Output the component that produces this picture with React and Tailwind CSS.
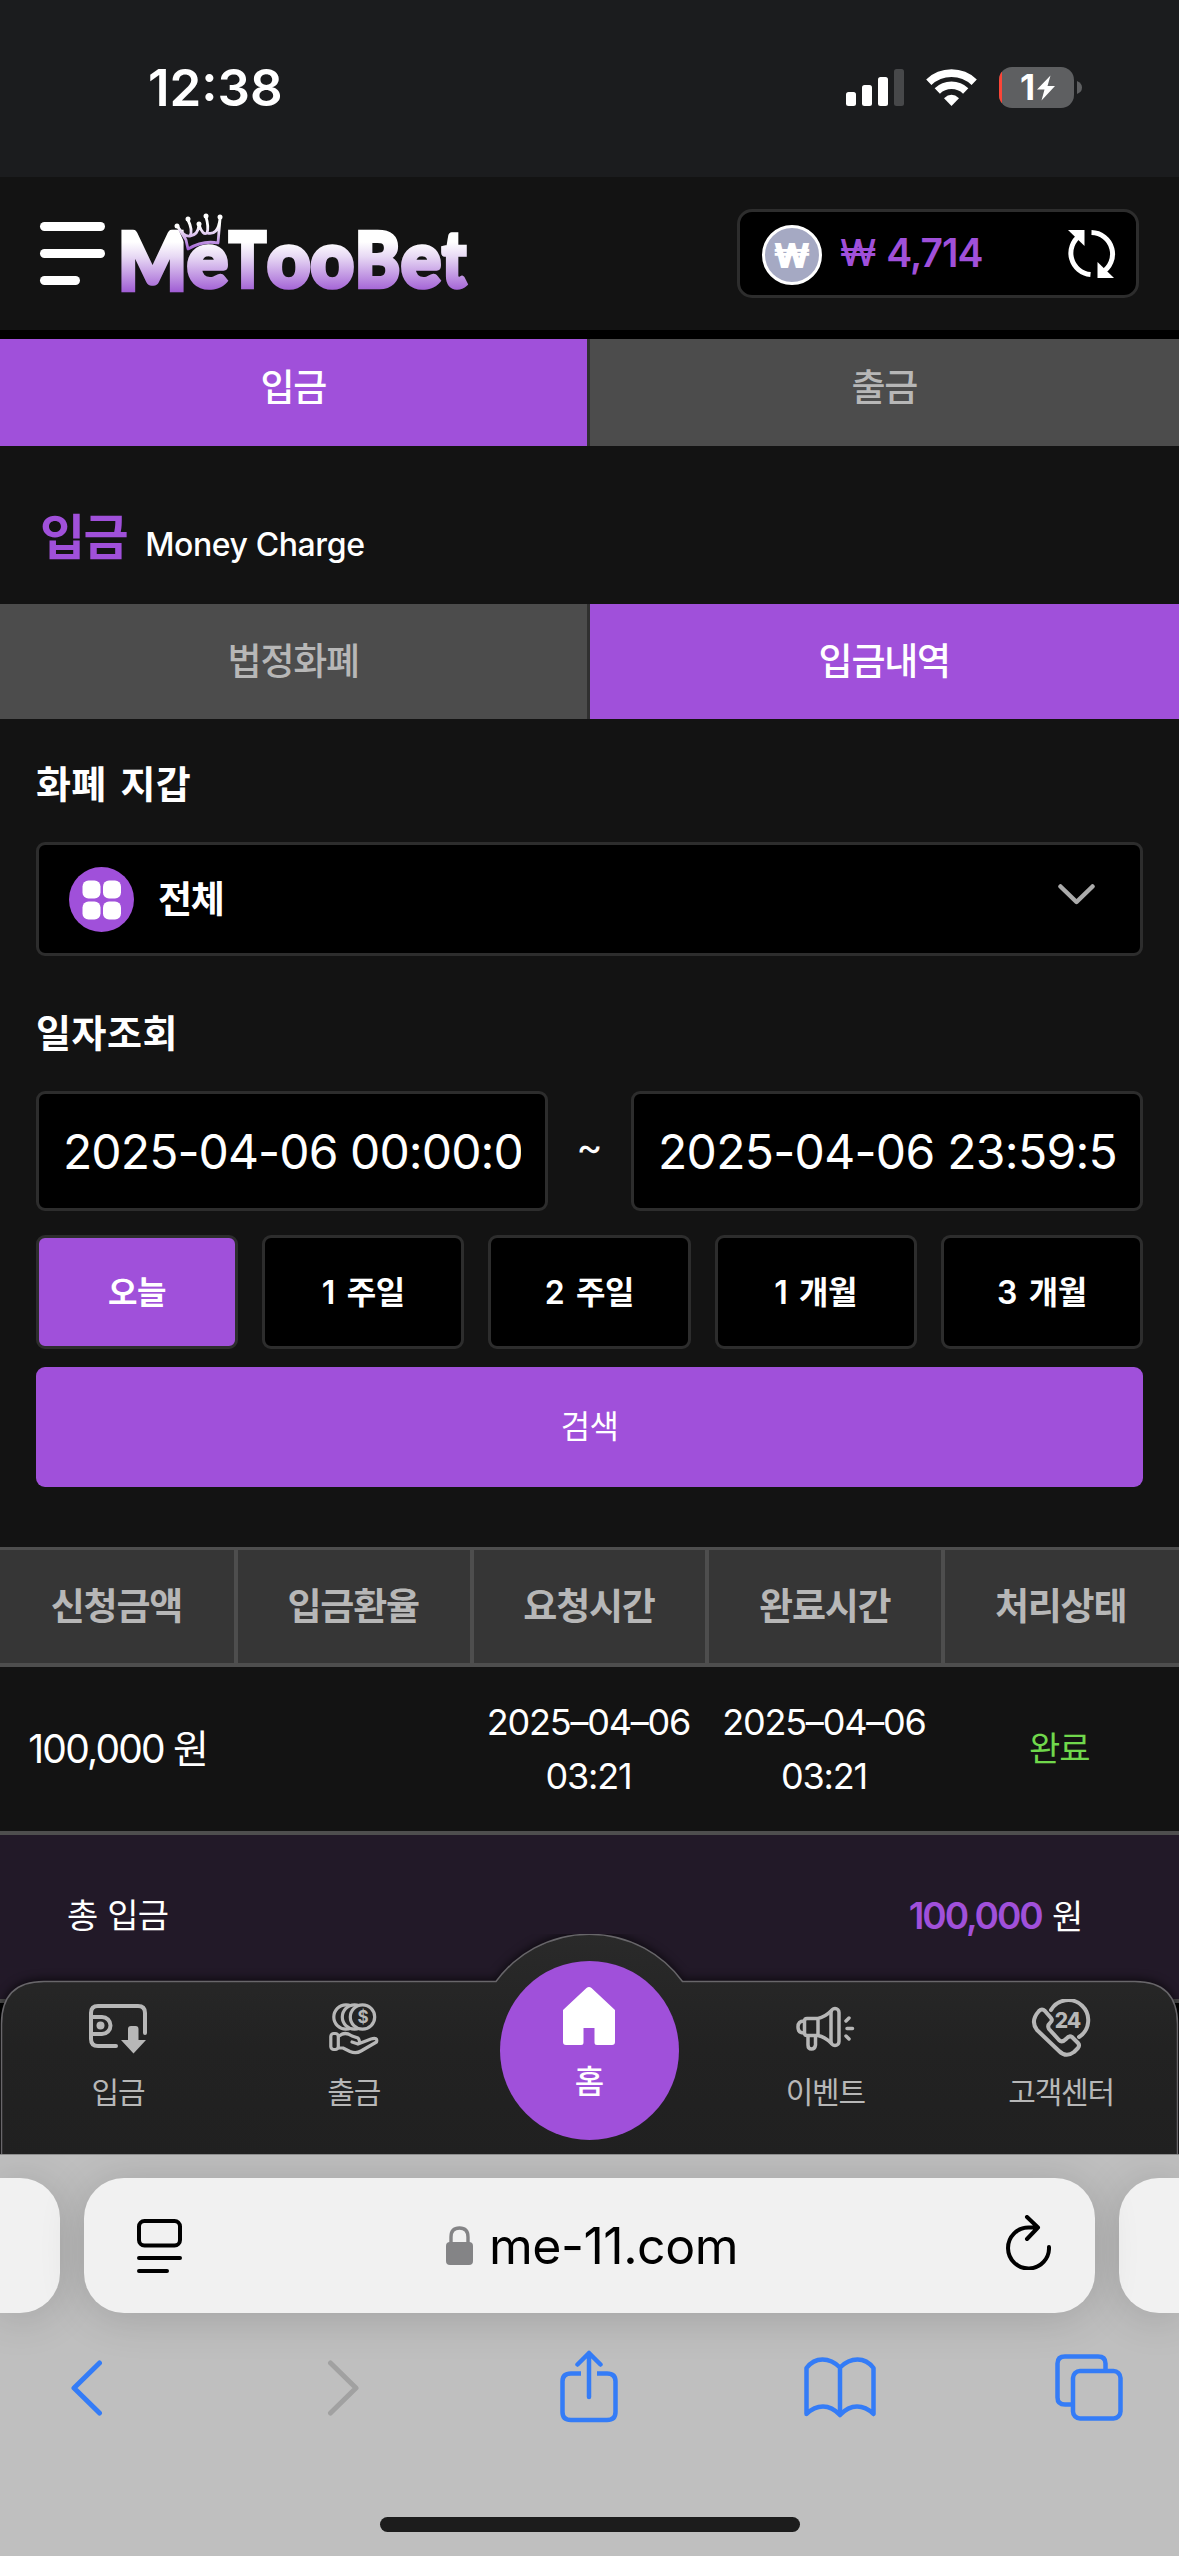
import clsx from 'clsx';

const periods = ['오늘', '1 주일', '2 주일', '1 개월', '3 개월'];
const columns = ['신청금액', '입금환율', '요청시간', '완료시간', '처리상태'];

function StatusBar() {
  return (
    <div className="flex h-[177px] shrink-0 items-start justify-between bg-[#1b1c1e] pr-[97px] pl-[148px] text-white">
      <span className="pt-[57px] text-[51px] leading-[62px] font-semibold">12:38</span>
      <div className="flex items-start pt-[67px]">
        <svg className="mt-[2px] h-[37px] w-[58px]" viewBox="0 0 58 37" fill="white">
          <rect x="0" y="23" width="10" height="14" rx="2.5" />
          <rect x="16" y="16" width="10" height="21" rx="2.5" />
          <rect x="32" y="8" width="10" height="29" rx="2.5" />
          <rect x="48" y="0" width="10" height="37" rx="2.5" fill="#47484a" />
        </svg>
        <svg className="mt-[2px] ml-[22px] h-[37px] w-[51px]" viewBox="0 0 51 37">
          <g fill="none" stroke="white" strokeWidth="7.6">
            <path d="M2.8 13.2A33 33 0 0 1 48.2 13.2" />
            <path d="M11.3 22A20.5 20.5 0 0 1 39.7 22" />
          </g>
          <path d="M25.5 37L18 29.2Q25.5 22.4 33 29.2Z" fill="white" />
        </svg>
        <div className="relative ml-[22px] h-[41px] w-[75px] overflow-hidden rounded-[13px] bg-[#5e5f61]">
          <div className="absolute inset-y-0 left-0 w-[3px] bg-[#fb4537]" />
          <div className="flex h-full items-center justify-center gap-[2px] pl-[2px]">
            <span className="text-[35px] leading-[41px] font-bold">1</span>
            <svg className="h-[26px] w-[18px]" viewBox="0 0 18 25" fill="white">
              <path d="M13.5 0L0 14H7.5L4.5 25L18 10.5H10.5Z" />
            </svg>
          </div>
        </div>
        <svg className="mt-[14px] ml-[3px] h-[13px] w-[5px]" viewBox="0 0 5 13">
          <path d="M0 0Q5 2 5 6.5T0 13Z" fill="#5e5f61" />
        </svg>
      </div>
    </div>
  );
}

function Logo() {
  return (
    <svg className="ml-[13px] h-[84px] w-[352px] overflow-visible" viewBox="118 212 352 84">
      <defs>
        <linearGradient id="logo" gradientUnits="userSpaceOnUse" x1="0" y1="242" x2="0" y2="292">
          <stop offset="0" stopColor="#ffffff" />
          <stop offset="0.3" stopColor="#e7d8f4" />
          <stop offset="1" stopColor="#a05dd4" />
        </linearGradient>
        <linearGradient id="crown" gradientUnits="userSpaceOnUse" x1="0" y1="226" x2="0" y2="250">
          <stop offset="0" stopColor="#ffffff" />
          <stop offset="1" stopColor="#a05dd4" />
        </linearGradient>
      </defs>
      <g
        fill="url(#logo)"
        stroke="url(#logo)"
        strokeWidth="4.5"
        fontFamily="Lato, Inter, sans-serif"
        fontWeight="900"
      >
        <text x="118" y="290" fontSize="80" textLength="69" lengthAdjust="spacingAndGlyphs">M</text>
        <text x="187" y="287" fontSize="79" textLength="41" lengthAdjust="spacingAndGlyphs">e</text>
        <text x="229" y="287" fontSize="76" textLength="37" lengthAdjust="spacingAndGlyphs">T</text>
        <text x="267" y="287" fontSize="79" textLength="87" lengthAdjust="spacingAndGlyphs">oo</text>
        <text x="355" y="287" fontSize="76" textLength="45" lengthAdjust="spacingAndGlyphs">B</text>
        <text x="401" y="287" fontSize="79" textLength="40" lengthAdjust="spacingAndGlyphs">e</text>
        <text x="442" y="287" fontSize="79" textLength="24" lengthAdjust="spacingAndGlyphs">t</text>
      </g>
      <path d="M177 226L187 249Q203 241 219 243L220 217L210 233L206 217L200 233L198 225L191 236L188 219L186 236Z" fill="#131313" />
      <path
        d="M178 227L186 240L188 249Q203 240 218 243L220 219M178 227Q184 237 190 236Q193 230 188 220M190 236Q198 235 199 225Q203 236 207 233Q209 227 206 217M207 233Q218 236 220 219"
        fill="none"
        stroke="url(#crown)"
        strokeWidth="2.8"
        strokeLinejoin="round"
      />
      <g fill="white">
        <circle cx="177" cy="226" r="2.5" />
        <circle cx="188" cy="219" r="2.5" />
        <circle cx="199" cy="224" r="2.5" />
        <circle cx="206" cy="216" r="2.5" />
        <circle cx="220" cy="217" r="2.5" />
      </g>
    </svg>
  );
}

function Header() {
  return (
    <header className="flex h-[162px] shrink-0 items-start border-b-[9px] border-black bg-[#131313] pl-[40px]">
      <div className="mt-[45px] flex w-[65px] flex-col gap-[18px]">
        <div className="h-[9px] rounded-full bg-white" />
        <div className="h-[9px] rounded-full bg-white" />
        <div className="h-[9px] w-[40px] rounded-full bg-white" />
      </div>
      <div className="mt-[35px]">
        <Logo />
      </div>
      <div className="mt-[32px] mr-[40px] ml-auto flex h-[89px] w-[402px] items-center rounded-[15px] border-[3px] border-[#2d2d2d] bg-black pr-[20px] pl-[22px]">
        <div className="mt-[3px] flex size-[60px] items-center justify-center rounded-full border-[3px] border-white bg-[#a5a9c3] text-[34px] font-black text-white">
          ₩
        </div>
        <span className="mb-[3px] ml-[18px] text-[37px] leading-none font-medium text-[#a050da]">₩</span>
        <span className="mb-[3px] ml-[10px] text-[39px] leading-none font-semibold tracking-[-1px] text-[#a050da]">4,714</span>
        <svg className="ml-auto h-[48px] w-[50px]" viewBox="0 0 50 48">
          <g fill="none" stroke="white" strokeWidth="5">
            <path d="M25.5 2.5A21.5 21.5 0 0 1 36 42.5" />
            <path d="M24.5 44.5A21.5 21.5 0 0 1 14 5.5" />
          </g>
          <path d="M2 0H18.5V16Z" fill="white" />
          <path d="M48 48H31.5V32Z" fill="white" />
        </svg>
      </div>
    </header>
  );
}

function Tabs({ items, active, className }) {
  return (
    <div className={clsx('grid shrink-0 grid-cols-2', className)}>
      {items.map((item, i) => (
        <div
          key={item}
          className={clsx(
            'flex items-center justify-center text-[37px] font-medium tracking-[-1.2px]',
            i === 0 && 'border-r-[3px] border-[#303030]',
            item === active ? 'bg-[#a050da] text-white' : 'bg-[#4c4c4c] text-[#b7b7b7]'
          )}
        >
          {item}
        </div>
      ))}
    </div>
  );
}

function SearchForm() {
  return (
    <section className="flex shrink-0 flex-col px-[36px]">
      <h3 className="mt-[37px] h-[56px] text-[38px] leading-[56px] font-bold tracking-[0.2px] [word-spacing:5px] text-white">화폐 지갑</h3>
      <div className="mt-[30px] flex h-[114px] items-center rounded-[9px] border-[3px] border-[#2d2d2d] bg-black pr-[45px] pl-[30px]">
        <svg className="size-[65px]" viewBox="0 0 65 65">
          <circle cx="32.5" cy="32.5" r="32.5" fill="#a050da" />
          <g fill="white">
            <rect x="13.5" y="13.5" width="18" height="18" rx="6" />
            <rect x="34" y="13.5" width="18" height="18" rx="6" />
            <rect x="13.5" y="34.5" width="18" height="18" rx="6" />
            <rect x="34" y="34.5" width="18" height="18" rx="6" />
          </g>
        </svg>
        <span className="mt-[2px] ml-[24px] text-[37px] font-bold tracking-[-1.2px] text-white">전체</span>
        <svg className="mt-[-10px] ml-auto h-[21px] w-[37px]" viewBox="0 0 37 21">
          <path d="M2.5 2.5L18.5 18L34.5 2.5" fill="none" stroke="#ababab" strokeWidth="4.5" strokeLinecap="round" strokeLinejoin="round" />
        </svg>
      </div>

      <h3 className="mt-[49px] h-[56px] text-[38px] leading-[56px] font-bold tracking-[0.5px] text-white">일자조회</h3>
      <div className="mt-[30px] flex h-[120px] items-center text-[48px] text-white">
        <div className="flex h-full w-[512px] items-center rounded-[9px] border-[3px] border-[#2d2d2d] bg-black px-[24px]">
          <span className="mt-[2px] w-full overflow-hidden tracking-[-0.9px] whitespace-nowrap">2025-04-06 00:00:0</span>
        </div>
        <span className="mb-[8px] flex-1 text-center text-[40px]">~</span>
        <div className="flex h-full w-[512px] items-center rounded-[9px] border-[3px] border-[#2d2d2d] bg-black px-[24px]">
          <span className="mt-[2px] w-full overflow-hidden tracking-[-0.7px] whitespace-nowrap">2025-04-06 23:59:5</span>
        </div>
      </div>

      <div className="mt-[24px] grid h-[114px] grid-cols-5 gap-[24px]">
        {periods.map((period, i) => (
          <div
            key={period}
            className={clsx(
              'flex items-center justify-center rounded-[9px] border-[3px] border-[#2d2d2d] pt-[2px] text-[32px] font-semibold tracking-[-0.4px] [word-spacing:4px] text-white',
              i === 0 ? 'bg-[#a050da]' : 'bg-black'
            )}
          >
            {period}
          </div>
        ))}
      </div>
      <div className="mt-[18px] flex h-[120px] items-center justify-center rounded-[9px] bg-[#a050da] text-[32px] tracking-[-0.6px] text-white">
        검색
      </div>
    </section>
  );
}

function HistoryTable() {
  return (
    <section className="mt-[60px] shrink-0">
      <div className="grid h-[120px] grid-cols-5 border-t-[3px] border-b-[4px] border-[#4e4e4e] bg-[#363636]">
        {columns.map((column, i) => (
          <div
            key={column}
            className={clsx(
              'flex items-center justify-center pr-[3px] text-[37px] font-bold tracking-[-1.2px] text-[#b7b7b7]',
              i > 0 && '-ml-[2px] border-l-[4px] border-[#4e4e4e]'
            )}
          >
            {column}
          </div>
        ))}
      </div>
      <div className="grid h-[168px] grid-cols-5 items-center border-b-[4px] border-[#4e4e4e] pr-[2px] text-center text-white">
        <span className="text-[39px] tracking-[-1.8px]">100,000 원</span>
        <span />
        <span className="text-[36px] leading-[54px] tracking-[-1.2px]">2025–04–06 03:21</span>
        <span className="text-[36px] leading-[54px] tracking-[-1.2px]">2025–04–06 03:21</span>
        <span className="pb-[2px] text-[34px] tracking-[-1px] text-[#70d84c]">완료</span>
      </div>
      <div className="flex h-[168px] items-center justify-between border-b-[4px] border-[#4e4e4e] bg-[#221928] pr-[97px] pb-[3px] pl-[67px] text-[34px] tracking-[-1.2px] text-white">
        <span className="tracking-[-0.8px] [word-spacing:1px]">총 입금</span>
        <span className="[word-spacing:2px]">
          <span className="text-[37px] font-semibold tracking-[-2.1px] text-[#a050da]">100,000</span> 원
        </span>
      </div>
    </section>
  );
}

function DepositIcon() {
  return (
    <svg className="h-[60px] w-[62px]" viewBox="87 1999 62 60" fill="none" stroke="#b7b7b7" strokeWidth="4" strokeLinecap="round">
      <path d="M145 2033V2013Q145 2006 138 2006H98Q91 2006 91 2013V2039Q91 2046 98 2046H116" />
      <path d="M92 2017H102A8.5 8.5 0 0 1 102 2034H92" />
      <circle cx="100.5" cy="2025.5" r="4" fill="#b7b7b7" stroke="none" />
      <path d="M128 2029Q128 2026 131 2026H135.5Q138.5 2026 138.5 2029V2040H146L133.5 2053.5L121 2040H128Z" fill="#b7b7b7" stroke="none" />
    </svg>
  );
}

function WithdrawIcon() {
  return (
    <svg className="h-[60px] w-[62px]" viewBox="323 1999 62 60" fill="none" stroke="#b7b7b7" strokeWidth="3.2" strokeLinecap="round" strokeLinejoin="round">
      <circle cx="346" cy="2017" r="12.2" fill="#242424" />
      <circle cx="354.5" cy="2017" r="12.2" fill="#242424" />
      <circle cx="362.5" cy="2017" r="12.2" fill="#242424" />
      <text x="362.5" y="2023" fontSize="17" fontWeight="700" textAnchor="middle" fill="#b7b7b7" stroke="none">$</text>
      <rect x="330.8" y="2033.5" width="7.5" height="16" rx="3" />
      <path d="M339 2036Q345 2031 352 2036L358 2038Q361 2042 358 2044L352 2042M358 2044L371 2039Q378 2037 376.5 2042L361 2051Q356 2054 350 2051.5L343 2048H339" />
    </svg>
  );
}

function EventIcon() {
  return (
    <svg className="h-[60px] w-[62px]" viewBox="794 1999 62 60" fill="none" stroke="#b7b7b7" strokeWidth="3.5" strokeLinecap="round" strokeLinejoin="round">
      <rect x="831" y="2008.5" width="8" height="37" rx="4" />
      <path d="M818 2018.5H807Q804.5 2018.5 804.5 2021V2033Q804.5 2035.5 807 2035.5H818ZM818 2018.5Q825 2017 831 2011M818 2035.5Q825 2037 831 2043" />
      <path d="M804 2021Q798 2021 798 2027T804 2033M808 2036V2045Q808 2049 811.5 2049T815.5 2045V2036" />
      <path d="M846 2021L849 2018M847 2028.5H852.5M846 2036L849 2039" />
    </svg>
  );
}

function SupportIcon() {
  return (
    <svg className="h-[60px] w-[62px]" viewBox="1031 1999 62 60" fill="none" stroke="#b7b7b7" strokeWidth="4" strokeLinecap="round" strokeLinejoin="round">
      <path d="M1052 2010A20 20 0 1 1 1080 2037" />
      <path d="M1040 2011Q1043 2008 1046 2011L1052 2018Q1054 2020.5 1051 2023Q1048 2025.5 1050 2029L1060 2040Q1063 2043 1067 2039Q1070 2035 1073 2037L1079 2043Q1081 2045 1079 2048L1075 2052Q1067 2058 1060 2051L1038 2030Q1031 2021 1040 2011Z" />
      <text x="1068.5" y="2028" fontSize="21" fontWeight="800" textAnchor="middle" fill="#b7b7b7" stroke="none" letterSpacing="-1">24</text>
    </svg>
  );
}

function HomeIcon() {
  return (
    <svg className="h-[58px] w-[52px]" viewBox="0 0 52 58" fill="white">
      <path d="M23.5 1Q26 -1 28.5 1L52 23V55Q52 58 49 58H34Q31.5 58 31.5 55.5V41H20.5V55.5Q20.5 58 18 58H3Q0 58 0 55V23Z" />
    </svg>
  );
}

function NavItem({ icon, label }) {
  return (
    <div className="flex flex-col items-center pt-[65px] text-[30px] tracking-[-1.2px] text-[#b7b7b7]">
      {icon}
      <span className="mt-[11px] leading-[44px]">{label}</span>
    </div>
  );
}

function BottomNav() {
  return (
    <nav className="absolute inset-x-0 bottom-[402px] h-[220px]">
      {/* bar outline with the raised arch behind the home button */}
      <svg className="absolute inset-0 overflow-hidden" width="1179" height="220" viewBox="0 1934 1179 220">
        <defs>
          <linearGradient id="bar" x1="0" y1="0" x2="0" y2="1">
            <stop offset="0" stopColor="#2a2a2a" />
            <stop offset="0.5" stopColor="#222222" />
            <stop offset="1" stopColor="#202020" />
          </linearGradient>
        </defs>
        <path
          d="M1.5 2160V2024Q1.5 1981.5 44 1981.5H496A115.5 115.5 0 0 1 682.5 1981.5H1135Q1177.5 1981.5 1177.5 2024V2160Z"
          fill="url(#bar)"
          stroke="#68666a"
          strokeWidth="1.5"
          className="drop-shadow-[0_-2px_4px_rgba(0,0,0,0.6)]"
        />
      </svg>
      <div className="relative grid grid-cols-5">
        <NavItem icon={<DepositIcon />} label="입금" />
        <NavItem icon={<WithdrawIcon />} label="출금" />
        <div className="flex justify-center pt-[27px]">
          <div className="flex size-[179px] flex-col items-center rounded-full bg-[#a050da] pt-[26px] text-[32px] font-medium text-white">
            <HomeIcon />
            <span className="mt-[14px] leading-[46px]">홈</span>
          </div>
        </div>
        <NavItem icon={<EventIcon />} label="이벤트" />
        <NavItem icon={<SupportIcon />} label="고객센터" />
      </div>
    </nav>
  );
}

function BrowserChrome() {
  return (
    <footer className="relative flex h-[402px] shrink-0 flex-col overflow-hidden border-t border-[#8d8d8d] bg-[#bfbfbf]">
      <div className="mt-[23px] flex h-[135px] justify-between">
        <div className="w-[60px] rounded-r-[40px] bg-[#f1f1f1] shadow-[0_4px_45px_rgba(0,0,0,0.16)]" />
        <div className="relative flex w-[1011px] items-center justify-between rounded-[40px] bg-[#f1f1f1] pr-[44px] pl-[53px] shadow-[0_4px_45px_rgba(0,0,0,0.16)]">
          <svg className="h-[54px] w-[45px]" viewBox="0 0 45 54" fill="none" stroke="black" strokeWidth="4" strokeLinecap="round">
            <rect x="2" y="2" width="41" height="24.5" rx="5.5" />
            <path d="M2 39H43M2 52H30" />
          </svg>
          <div className="mr-[4px] flex items-center">
            <svg className="h-[39px] w-[27px]" viewBox="0 0 27 39">
              <rect x="0" y="16" width="27" height="23" rx="4" fill="#848486" />
              <path d="M5 17V11Q5 2 13.5 2T22 11V17" fill="none" stroke="#848486" strokeWidth="3.4" />
            </svg>
            <span className="ml-[16px] text-[50px] leading-[60px] tracking-[-0.5px] text-black">me-11.com</span>
          </div>
          <svg className="mt-[-6px] h-[55px] w-[45px]" viewBox="0 0 45 55" fill="none" stroke="black" strokeWidth="4" strokeLinecap="round" strokeLinejoin="round">
            <path d="M43 32A20.5 20.5 0 1 1 22.5 12.5H32M21 2L32 12.5L21 24" />
          </svg>
        </div>
        <div className="w-[60px] rounded-l-[40px] bg-[#f1f1f1] shadow-[0_4px_45px_rgba(0,0,0,0.16)]" />
      </div>

      <div className="mt-[37px] flex h-[73px] items-center pl-[70px]">
        <svg className="mt-[2px] h-[56px] w-[33px]" viewBox="0 0 33 56" fill="none" stroke="#347cf7" strokeWidth="5" strokeLinecap="round" strokeLinejoin="round">
          <path d="M29.5 3L4 28L29.5 53" />
        </svg>
        <svg className="mt-[2px] ml-[224px] h-[56px] w-[33px]" viewBox="0 0 33 56" fill="none" stroke="#a1a1a1" strokeWidth="5" strokeLinecap="round" strokeLinejoin="round">
          <path d="M3.5 3L29 28L3.5 53" />
        </svg>
        <svg className="ml-[200px] h-[73px] w-[58px]" viewBox="0 0 58 73" fill="none" stroke="#347cf7" strokeWidth="4.5" strokeLinecap="round" strokeLinejoin="round">
          <path d="M29 47V3M17.5 14.5L29 3L40.5 14.5" />
          <path d="M21 23.5H11Q2.5 23.5 2.5 31.5V62Q2.5 70 11 70H47Q55.5 70 55.5 62V31.5Q55.5 23.5 47 23.5H37" strokeLinecap="butt" />
        </svg>
        <svg className="mt-[2px] ml-[186px] h-[61px] w-[72px]" viewBox="0 0 72 61" fill="none" stroke="#347cf7" strokeWidth="4.5" strokeLinecap="round" strokeLinejoin="round">
          <path d="M36 10.5Q28 2.5 18.5 2.5T2.5 11V57Q10 49.5 19 49.5T36 58Q44 49.5 53 49.5T69.5 57V11Q63 2.5 53.5 2.5T36 10.5V58" />
        </svg>
        <svg className="mt-[2px] ml-[179px] h-[67px] w-[68px]" viewBox="0 0 68 67" fill="none" stroke="#347cf7" strokeWidth="4.5">
          <rect x="18" y="17" width="47.5" height="47.5" rx="7" />
          <path d="M16 50.5H10Q2.5 50.5 2.5 43.5V9.5Q2.5 2.5 10 2.5H43Q50.5 2.5 50.5 9.5V15" />
        </svg>
      </div>
      <div className="mt-auto mb-[24px] h-[15px] w-[420px] self-center rounded-full bg-[#1c1c1c]" />
    </footer>
  );
}

function App() {
  return (
    <div className="relative flex h-[2556px] w-[1179px] flex-col overflow-hidden bg-black font-[Inter,'Noto_Sans_CJK_KR',sans-serif]">
      <StatusBar />
      <Header />
      <main className="flex min-h-0 flex-1 flex-col overflow-hidden">
        <div className="flex shrink-0 flex-col bg-[#131313] text-white">
          <Tabs items={['입금', '출금']} active="입금" className="h-[107px] *:pb-[9px]" />
          <div className="flex h-[158px] items-baseline pt-[56px] pl-[40px]">
            <h2 className="text-[49px] leading-[72px] font-semibold tracking-[-1.5px] text-[#a050da]">입금</h2>
            <span className="relative top-[1px] ml-[18px] text-[32px] font-medium tracking-[-0.4px]">Money Charge</span>
          </div>
          <Tabs items={['법정화폐', '입금내역']} active="입금내역" className="h-[115px]" />
          <SearchForm />
          <HistoryTable />
        </div>
      </main>
      <BottomNav />
      <BrowserChrome />
    </div>
  );
}

export default App;
